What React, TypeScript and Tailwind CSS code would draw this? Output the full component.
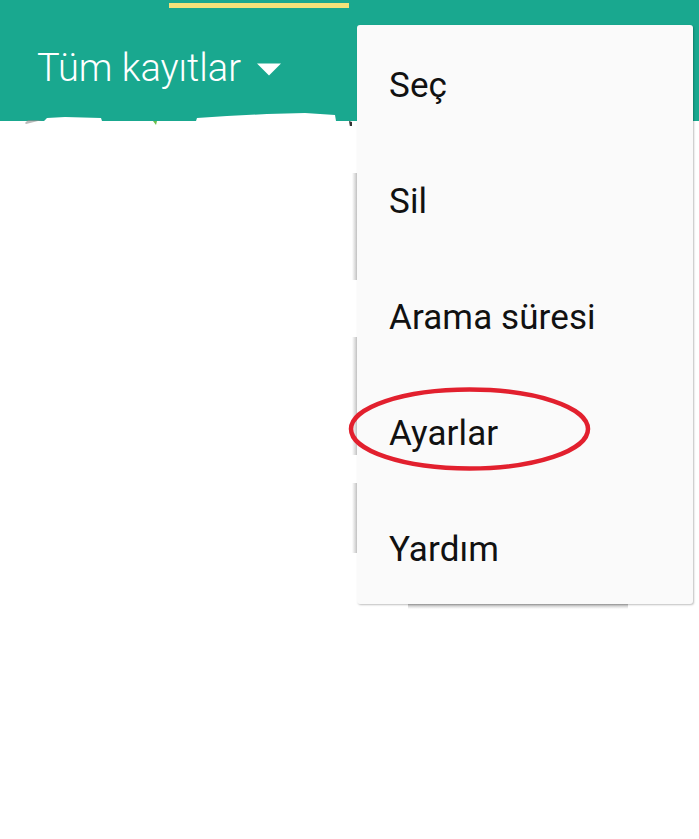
const items = ["Seç", "Sil", "Arama süresi", "Ayarlar", "Yardım"];

const leftShadows = [
  "top-[173px] h-[107px]",
  "top-[337px] h-[118px]",
  "top-[483px] h-[70px]",
];

export default function App() {
  return (
    <div className="relative h-[839px] w-[699px] overflow-hidden bg-white font-['Roboto',sans-serif]">
      <header className="h-[121px] bg-[#19a88f]">
        <div className="ml-[169px] h-[8px] w-[180px] border-t-[3px] border-[#19a88f] bg-[#f4e27a]" />
        <div className="mt-[35px] flex items-center pl-[37px]">
          <span className="text-[38px] leading-[50px] font-light text-white">Tüm kayıtlar</span>
          <svg className="ml-[15px] mt-[1px]" width="26" height="14" viewBox="0 0 26 14">
            <path d="M1 1.5h24L13 13.5z" fill="#fff" />
          </svg>
        </div>
      </header>

      <svg className="absolute left-0 top-[108px]" width="357" height="18" viewBox="0 0 357 18">
        <path
          d="M44 13l3-3 18-1 36 1 1 3zM196 13l1-3 30-2 40-2 38-1 30 2 1 6z"
          fill="#fff"
        />
        <path d="M25 15l3-3 14 0-16 4z" fill="#8a8a8a" opacity="0.6" />
        <path d="M153 13l4 0-1 4z" fill="#6cc04a" />
        <path d="M349 13l3 1 0 6-2-1z" fill="#333" />
      </svg>

      {leftShadows.map((position) => (
        <div
          key={position}
          className={`absolute left-[352px] w-[5px] bg-gradient-to-l from-[#c4c4c4] to-transparent ${position}`}
        />
      ))}
      <div className="absolute left-[408px] top-[604px] h-[5px] w-[220px] bg-gradient-to-b from-[#bdbdbd] to-transparent" />

      <div className="absolute left-[357px] top-[25px] flex h-[579px] w-[336px] flex-col rounded-[3px] bg-[#fafafa] pl-[32px] pt-[3px] shadow-[1px_1px_2px_rgba(0,0,0,0.25)]">
        {items.map((item) => (
          <div key={item} className="flex h-[116px] shrink-0 items-center text-[35px] tracking-[0.1px] text-[#111]">
            {item}
          </div>
        ))}
      </div>

      <svg className="absolute left-[348px] top-[386px]" width="244" height="86" viewBox="0 0 244 86" fill="none">
        <ellipse cx="121.5" cy="43" rx="118.5" ry="39.5" stroke="#e2202e" strokeWidth="4.5" />
      </svg>
    </div>
  );
}
